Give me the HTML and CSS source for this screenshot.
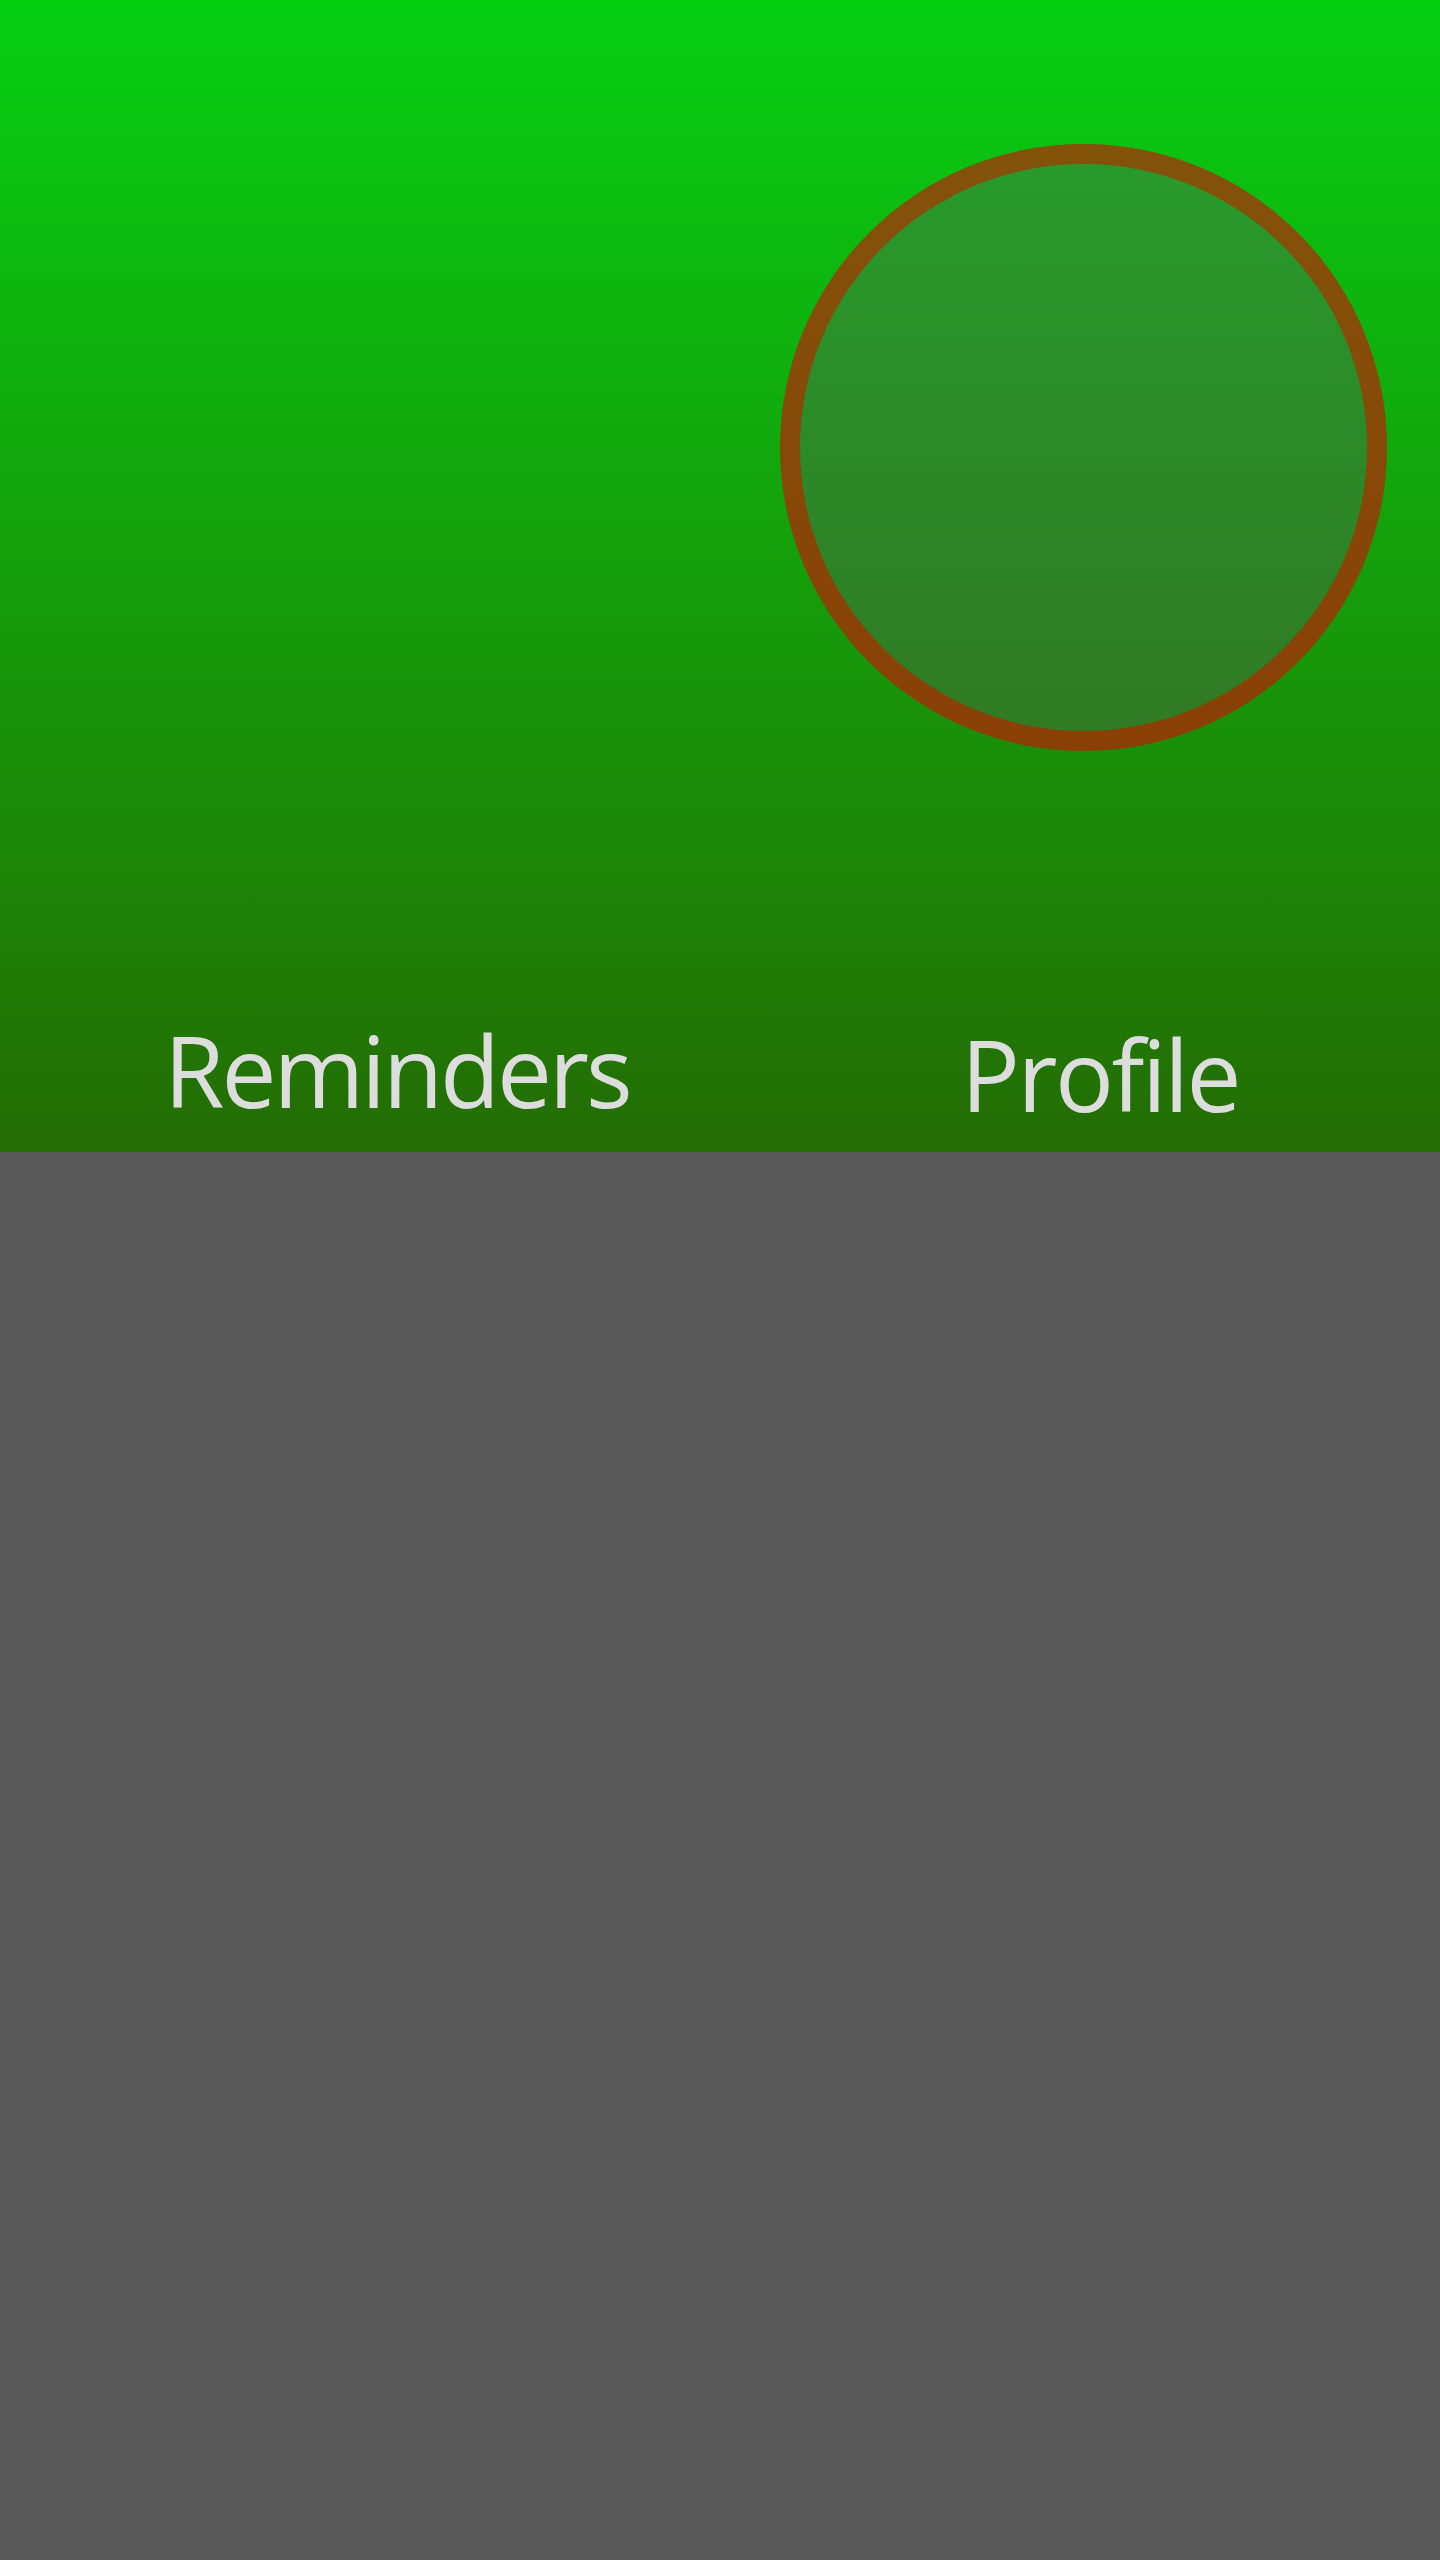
FILE: index.html
```html
<!DOCTYPE html>
<html lang="en">
<head>
<meta charset="utf-8">
<title>Reminders</title>
<link rel="stylesheet" href="styles.css">
</head>
<body>
<div class="app">
  <header class="hero">
    <div class="avatar-row">
      <div class="avatar"></div>
    </div>
    <nav class="tabs">
      <div class="tab tab-left">Reminders</div>
      <div class="tab tab-right">Profile</div>
    </nav>
  </header>
  <main class="content"></main>
</div>
</body>
</html>
```
FILE: styles.css
```css
html, body {
  margin: 0;
  padding: 0;
}
body {
  background: #585858;
  font-family: "Open Sans", "Noto Sans", sans-serif;
}
.app {
  display: flex;
  flex-direction: column;
  min-height: 2560px;
}
.hero {
  height: 1152px;
  box-sizing: border-box;
  background: linear-gradient(to bottom, #06cf12 0%, #246c04 100%);
  display: flex;
  flex-direction: column;
  padding-top: 144px;
  padding-bottom: 18px;
}
.avatar-row {
  display: flex;
  justify-content: flex-end;
  padding-right: 53px;
}
.avatar {
  width: 607px;
  height: 607px;
  box-sizing: border-box;
  border-radius: 50%;
  border: 20px solid transparent;
  background:
    linear-gradient(to bottom, #289a2b 0%, #307a24 100%) padding-box,
    linear-gradient(to bottom, #83530a 0%, #8a3f06 100%) border-box;
}
.tabs {
  margin-top: auto;
  display: grid;
  grid-template-columns: 720px 720px;
  align-items: start;
}
.tab {
  color: #dddddd;
  font-size: 98px;
  line-height: 120px;
  letter-spacing: -3px;
  white-space: nowrap;
}
.tab-left {
  padding-left: 164px;
}
.tab-right {
  padding-left: 241px;
  padding-top: 4px;
  letter-spacing: -2.5px;
}
.content {
  flex: 1;
  background: #585858;
}
```
